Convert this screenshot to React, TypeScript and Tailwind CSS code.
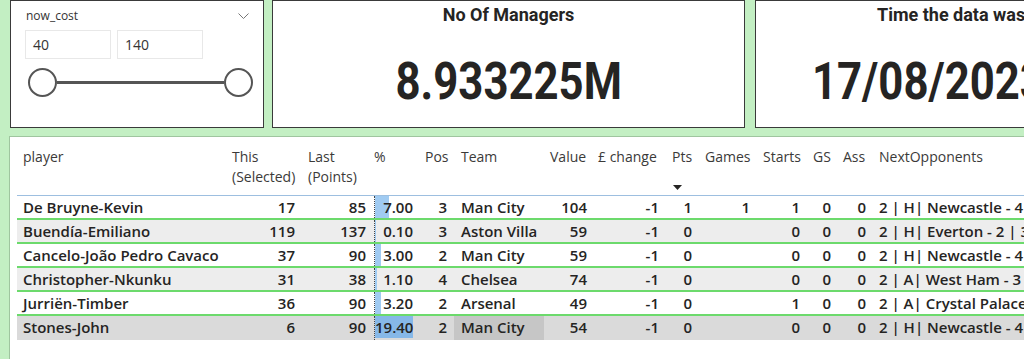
type Row = {
  player: string;
  sel: number;
  last: number;
  pct: number;
  pos: number;
  team: string;
  value: number;
  change: number;
  pts: number;
  games: number | null;
  starts: number;
  gs: number;
  ass: number;
  next: string;
};

const rows: Row[] = [
  { player: "De Bruyne-Kevin", sel: 17, last: 85, pct: 7.0, pos: 3, team: "Man City", value: 104, change: -1, pts: 1, games: 1, starts: 1, gs: 0, ass: 0, next: "2 | H| Newcastle - 4 | A| Sheffield Utd - 2" },
  { player: "Buendía-Emiliano", sel: 119, last: 137, pct: 0.1, pos: 3, team: "Aston Villa", value: 59, change: -1, pts: 0, games: null, starts: 0, gs: 0, ass: 0, next: "2 | H| Everton - 2 | 3 | A| Burnley - 2" },
  { player: "Cancelo-João Pedro Cavaco", sel: 37, last: 90, pct: 3.0, pos: 2, team: "Man City", value: 59, change: -1, pts: 0, games: null, starts: 0, gs: 0, ass: 0, next: "2 | H| Newcastle - 4 | A| Sheffield Utd - 2" },
  { player: "Christopher-Nkunku", sel: 31, last: 38, pct: 1.1, pos: 4, team: "Chelsea", value: 74, change: -1, pts: 0, games: null, starts: 0, gs: 0, ass: 0, next: "2 | A| West Ham - 3 | H| Luton - 2" },
  { player: "Jurriën-Timber", sel: 36, last: 90, pct: 3.2, pos: 2, team: "Arsenal", value: 49, change: -1, pts: 0, games: null, starts: 1, gs: 0, ass: 0, next: "2 | A| Crystal Palace - 3 | H| Fulham - 2" },
  { player: "Stones-John", sel: 6, last: 90, pct: 19.4, pos: 2, team: "Man City", value: 54, change: -1, pts: 0, games: null, starts: 0, gs: 0, ass: 0, next: "2 | H| Newcastle - 4 | A| Sheffield Utd - 2" },
];

type Col = {
  key: keyof Row;
  label: string[];
  w: string;
  hp: string;
  cp: string;
  right: boolean;
};

const columns: Col[] = [
  { key: "player", label: ["player"], w: "w-[210px]", hp: "pl-[6px]", cp: "pl-[6px]", right: false },
  { key: "sel", label: ["This", "(Selected)"], w: "w-[73px]", hp: "pl-[5px]", cp: "pr-[5px]", right: true },
  { key: "last", label: ["Last", "(Points)"], w: "w-[74px]", hp: "pl-[8px]", cp: "pr-[8px]", right: true },
  { key: "pct", label: ["%"], w: "w-[45px]", hp: "pl-0", cp: "pr-[6px]", right: true },
  { key: "pos", label: ["Pos"], w: "w-[35px]", hp: "pl-[6px]", cp: "pr-[7px]", right: true },
  { key: "team", label: ["Team"], w: "w-[90px]", hp: "pl-[7px]", cp: "pl-[7px]", right: false },
  { key: "value", label: ["Value"], w: "w-[48px]", hp: "pl-[6px]", cp: "pr-[5px]", right: true },
  { key: "change", label: ["£ change"], w: "w-[73px]", hp: "pl-[6px]", cp: "pr-[6px]", right: true },
  { key: "pts", label: ["Pts"], w: "w-[33px]", hp: "pl-[7px]", cp: "pr-[6px]", right: true },
  { key: "games", label: ["Games"], w: "w-[58px]", hp: "pl-[7px]", cp: "pr-[6px]", right: true },
  { key: "starts", label: ["Starts"], w: "w-[50px]", hp: "pl-[7px]", cp: "pr-[6px]", right: true },
  { key: "gs", label: ["GS"], w: "w-[31px]", hp: "pl-[7px]", cp: "pr-[6px]", right: true },
  { key: "ass", label: ["Ass"], w: "w-[35px]", hp: "pl-[6px]", cp: "pr-[6px]", right: true },
  { key: "next", label: ["NextOpponents"], w: "w-[360px]", hp: "pl-[7px]", cp: "pl-[7px]", right: false },
];

function Slicer() {
  return (
    <div className="w-[254px] h-[128px] shrink-0 ml-[10px] border border-[#3a3a3a] bg-white pl-[14px] pt-[6px] font-['Open_Sans',sans-serif] text-[#333]">
      <div className="flex items-center justify-between pr-[14px] h-[18px]">
        <span className="text-[12px] leading-[16px] pl-[1px]">now_cost</span>
        <svg width="11" height="6" viewBox="0 0 11 6" fill="none">
          <path d="M0.5 0.5 L5.5 5.5 L10.5 0.5" stroke="#777" strokeWidth="1" />
        </svg>
      </div>
      <div className="flex gap-[6px] mt-[5px]">
        <div className="w-[86px] h-[29px] border border-[#e8e8e8] pl-[7px] text-[14px] leading-[27px]">40</div>
        <div className="w-[86px] h-[29px] border border-[#e8e8e8] pl-[7px] text-[14px] leading-[27px]">140</div>
      </div>
      <div className="flex items-center w-[225px] ml-[3px] mt-[9px]">
        <div className="w-[29px] h-[29px] rounded-full border-2 border-[#555] bg-white shrink-0" />
        <div className="flex-1 h-[3px] bg-[#555]" />
        <div className="w-[29px] h-[29px] rounded-full border-2 border-[#555] bg-white shrink-0" />
      </div>
    </div>
  );
}

function Card({ title, value, className, left }: { title: string; value: string; className: string; left?: boolean }) {
  return (
    <div className={`h-[128px] shrink-0 border border-[#3a3a3a] bg-white font-[Roboto,sans-serif] text-[#252423] whitespace-nowrap ${className}`}>
      <div className={`pt-[3px] text-[18px] leading-[22px] font-bold ${left ? "pl-[121px]" : "text-center"}`}>{title}</div>
      <div className={`mt-[26px] text-[52px] leading-[60px] font-bold ${left ? "pl-[56px]" : "text-center"}`}>
        <span className={`inline-block scale-x-[0.84] ${left ? "origin-left" : ""}`}>{value}</span>
      </div>
    </div>
  );
}

function cellText(r: Row, c: Col) {
  const v = r[c.key];
  if (v === null) return "";
  if (c.key === "pct") return (v as number).toFixed(2);
  return String(v);
}

function Table() {
  return (
    <div className="mt-[8px] ml-[9px] flex-1 bg-white border-l border-t border-[#9fc59f] pl-[7px] font-['Open_Sans',sans-serif] overflow-hidden">
      <div className="flex pt-[10px] h-[59px] border-b border-[#9dbfe0] w-max text-[14px] leading-[20px] text-[#3b3a39]">
        {columns.map((c) => (
          <div key={c.key} className={`${c.w} ${c.hp} shrink-0 whitespace-nowrap`}>
            {c.label.map((l) => (
              <div key={l}>{l}</div>
            ))}
            {c.key === "pts" && (
              <svg className="mt-[18px] ml-[1px]" width="9" height="5" viewBox="0 0 9 5">
                <polygon points="0,0 9,0 4.5,5" fill="#252423" />
              </svg>
            )}
          </div>
        ))}
      </div>
      {rows.map((r, i) => {
        const last = i === rows.length - 1;
        const bg = last ? "bg-[#dadada]" : i % 2 === 1 ? "bg-[#ededed]" : "bg-white";
        return (
          <div
            key={r.player}
            className={`flex w-max h-[24px] text-[15px] leading-[22px] font-semibold text-[#252423] ${bg} ${last ? "" : "border-b-2 border-[#6cda6c]"}`}
          >
            {columns.map((c) => {
              const align = c.right ? "text-right" : "text-left";
              const extra = last && c.key === "team" ? "bg-[#c6c6c6]" : "";
              if (c.key === "pct") {
                return (
                  <div key={c.key} className={`${c.w} ${c.cp} ${align} shrink-0 relative border-l border-dotted border-[#444]`}>
                    <div
                      className={`absolute left-0 top-0 h-[22px] ${last ? "bg-[#86b8e8]" : "bg-[#a0cbf2]"}`}
                      style={{ width: `${r.pct * 1.96}px` }}
                    />
                    <span className="relative">{cellText(r, c)}</span>
                  </div>
                );
              }
              return (
                <div key={c.key} className={`${c.w} ${c.cp} ${align} ${extra} shrink-0 whitespace-nowrap`}>
                  {cellText(r, c)}
                </div>
              );
            })}
          </div>
        );
      })}
    </div>
  );
}

export default function App() {
  return (
    <div className="w-[1024px] h-[359px] overflow-hidden bg-[#c3efc3] flex flex-col">
      <div className="flex">
        <Slicer />
        <Card title="No Of Managers" value="8.933225M" className="w-[473px] ml-[8px]" />
        <Card title="Time the data was refreshed" value="17/08/2023 11:45" className="w-[473px] ml-[10px]" left />
      </div>
      <Table />
    </div>
  );
}
